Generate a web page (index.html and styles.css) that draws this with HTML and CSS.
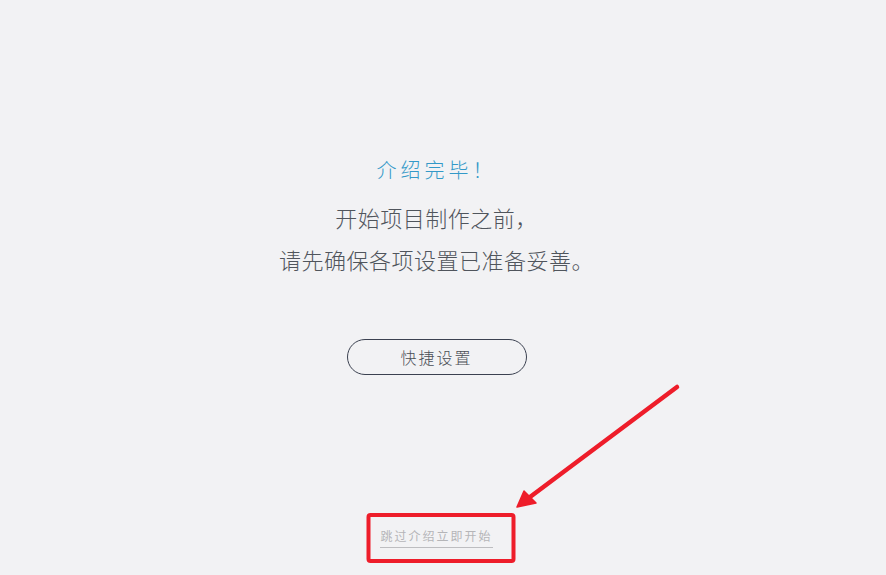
FILE: index.html
```html
<!DOCTYPE html>
<html lang="zh-CN">
<head>
<meta charset="utf-8">
<title>介绍完毕</title>
<link rel="stylesheet" href="styles.css">
</head>
<body>
<main class="page">
  <h1 class="title">介绍完毕！</h1>
  <p class="desc">开始项目制作之前，<br>请先确保各项设置已准备妥善。</p>
  <button class="quick-btn" type="button">快捷设置</button>
  <a class="skip-link" href="#">跳过介绍立即开始</a>
</main>
<svg class="annotation" width="886" height="575" viewBox="0 0 886 575" aria-hidden="true">
  <rect x="368.5" y="515" width="145" height="46" rx="2" fill="none" stroke="#ee1d2a" stroke-width="4"/>
  <line x1="677" y1="387" x2="530" y2="497" stroke="#ee1d2a" stroke-width="4.5" stroke-linecap="round"/>
  <polygon points="517,507 524,491 536,503" fill="#ee1d2a" stroke="#ee1d2a" stroke-width="1.5" stroke-linejoin="round"/>
</svg>
</body>
</html>
```
FILE: styles.css
```css
html, body {
  margin: 0;
  padding: 0;
  background: #f2f2f4;
}
body {
  width: 886px;
  height: 575px;
  overflow: hidden;
  position: relative;
  font-family: "Noto Sans CJK SC", "Noto Sans", sans-serif;
}
.page {
  display: flex;
  flex-direction: column;
  align-items: center;
  padding-top: 157px;
  padding-right: 13px;
  box-sizing: border-box;
  height: 575px;
}
.title {
  margin: 0;
  font-size: 20px;
  font-weight: 300;
  line-height: 26px;
  letter-spacing: 4px;
  color: #3399c8;
}
.desc {
  margin: 13px 0 0;
  font-size: 22px;
  font-weight: 300;
  line-height: 42px;
  letter-spacing: 0.5px;
  color: #50555c;
  text-align: center;
}
.quick-btn {
  margin-top: 59px;
  width: 180px;
  height: 36px;
  border: 1px solid #3b4150;
  border-radius: 18px;
  background: transparent;
  font-family: inherit;
  font-size: 16px;
  font-weight: 300;
  letter-spacing: 2px;
  color: #4a4e55;
  padding: 0;
}
.skip-link {
  margin-top: 152px;
  font-size: 12px;
  line-height: 18px;
  letter-spacing: 2px;
  color: #b5b5b8;
  text-decoration: none;
  border-bottom: 1px solid #bdbdc0;
  padding-bottom: 2px;
}
.annotation {
  position: absolute;
  left: 0;
  top: 0;
  pointer-events: none;
}
```
